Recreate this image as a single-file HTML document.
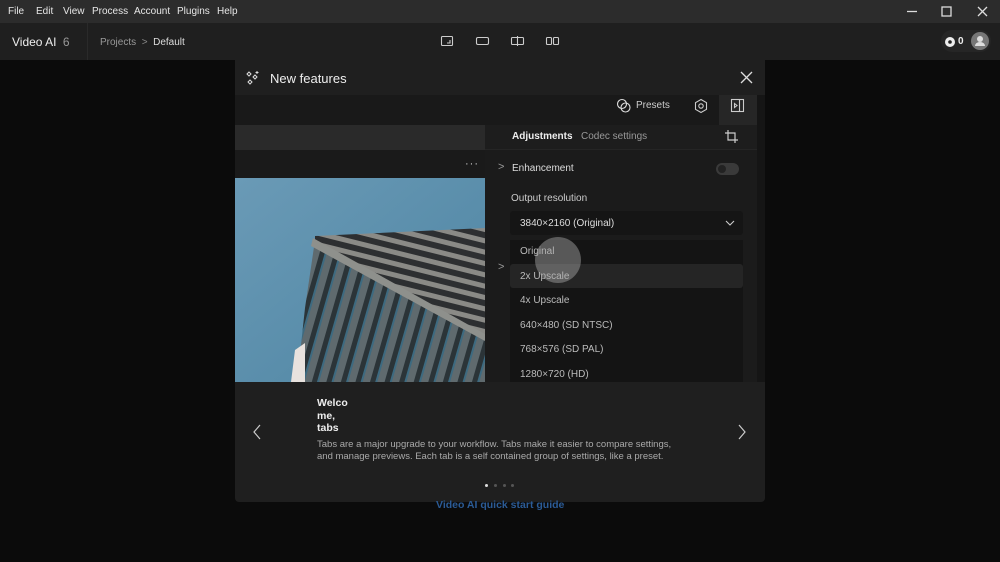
<!DOCTYPE html>
<html><head><meta charset="utf-8"><style>
*{margin:0;padding:0;box-sizing:border-box}
body{width:1000px;height:562px;background:#0b0b0b;font-family:"Liberation Sans",sans-serif;position:relative;overflow:hidden;color:#ddd}
.abs{position:absolute}
.menu{left:0;top:0;width:1000px;height:23px;background:#2c2c2c;font-size:10px;color:#e6e6e6}
.menu span{position:absolute;top:6px}
.tool{left:0;top:23px;width:1000px;height:37px;background:#1f1f1f}
.t{font-size:11px}
</style></head><body>
<div class="abs menu">
<span style="left:8px">File</span><span style="left:36px">Edit</span><span style="left:63px">View</span><span style="left:92px">Process</span><span style="left:134px">Account</span><span style="left:177px">Plugins</span><span style="left:217px">Help</span>
<svg class="abs" style="left:900px;top:0" width="100" height="23"><g stroke="#ddd" stroke-width="1.3" fill="none"><path d="M7 11.5h10"/><rect x="42" y="7" width="9" height="9"/><path d="M78 7l9 9M87 7l-9 9"/></g></svg>
</div>
<div class="abs tool">
<div class="abs" style="left:12px;top:12px;font-size:12px;color:#eee">Video AI <span style="color:#999;margin-left:3px">6</span></div>
<div class="abs" style="left:87px;top:0;width:1px;height:37px;background:#2a2a2a"></div>
<div class="abs" style="left:100px;top:14px;font-size:10px;color:#999">Projects &nbsp;<span style="color:#888">&gt;</span>&nbsp; <span style="color:#ddd">Default</span></div>
<svg class="abs" style="left:435px;top:8px" width="130" height="20"><g stroke="#ccc" stroke-width="1.1" fill="none"><rect x="6.5" y="5.5" width="11" height="9" rx="1"/><path d="M12 12h3v-3"/><rect x="41.5" y="6.5" width="12" height="7" rx="1.5"/><rect x="76.5" y="6.5" width="12" height="7" rx="1"/><path d="M82.5 5v10"/><rect x="111.5" y="6.5" width="5" height="7" rx="1"/><rect x="118.5" y="6.5" width="5" height="7" rx="1"/></g></svg>
<div class="abs" style="left:941px;top:7px;width:50px;height:22px;border-radius:11px;background:#262626"></div>
<svg class="abs" style="left:944px;top:13px" width="12" height="12"><circle cx="6" cy="6" r="5" fill="#eee"/><circle cx="6" cy="6" r="1.8" fill="#222"/></svg>
<div class="abs" style="left:958px;top:13px;font-size:10px;color:#eee;font-weight:bold">0</div>
<div class="abs" style="left:971px;top:9px;width:18px;height:18px;border-radius:50%;background:#777"><svg width="18" height="18"><circle cx="9" cy="7" r="3" fill="#ddd"/><path d="M4 14a5 4 0 0 1 10 0z" fill="#ddd"/></svg></div>
</div>

<!-- modal -->
<div class="abs" style="left:235px;top:60px;width:530px;height:442px;background:#1f1f1f;border-radius:0 0 4px 4px"></div>
<svg class="abs" style="left:244px;top:70px" width="18" height="18"><g fill="none" stroke="#ddd" stroke-width="1"><path d="M5 2l2 2-2 2-2-2z"/><path d="M11 5l2 2-2 2-2-2z"/><path d="M6 10l2 2-2 2-2-2z"/><path d="M13 1v3M11.5 2.5h3"/></g></svg>
<div class="abs" style="left:270px;top:71px;font-size:13px;color:#eee">New features</div>
<svg class="abs" style="left:739px;top:70px" width="16" height="16"><path d="M2 2l11 11M13 2l-11 11" stroke="#ddd" stroke-width="1.3"/></svg>

<!-- inner app -->
<div class="abs" style="left:235px;top:95px;width:530px;height:287px;background:#151515"></div>
<div class="abs" style="left:235px;top:95px;width:522px;height:30px;background:#191919"></div>
<div class="abs" style="left:719px;top:95px;width:38px;height:30px;background:#262626"></div>
<svg class="abs" style="left:616px;top:98px" width="16" height="16"><g fill="none" stroke="#ddd" stroke-width="1.1"><circle cx="6" cy="6" r="4.5"/><circle cx="9.5" cy="9.5" r="4.5"/></g></svg>
<div class="abs t" style="left:636px;top:100px;font-size:10px;color:#ccc">Presets</div>
<svg class="abs" style="left:693px;top:98px" width="16" height="16"><g fill="none" stroke="#ccc" stroke-width="1.1"><path d="M8 1.5l5.5 3.2v6.6L8 14.5 2.5 11.3V4.7z"/><circle cx="8" cy="8" r="2.2"/></g></svg>
<svg class="abs" style="left:730px;top:98px" width="16" height="16"><g fill="none" stroke="#ccc" stroke-width="1.1"><rect x="1.5" y="1.5" width="12" height="12"/><path d="M9.5 1.5v12M4.5 5.5l2.5 2-2.5 2z"/></g></svg>
<!-- left panel -->
<div class="abs" style="left:235px;top:125px;width:250px;height:25px;background:#2a2a2a"></div>
<div class="abs" style="left:235px;top:150px;width:250px;height:28px;background:#1a1a1a"></div>
<div class="abs" style="left:465px;top:158px;font-size:11px;color:#ccc;letter-spacing:1px">···</div>
<svg class="abs" style="left:235px;top:178px" width="250" height="204">
<defs><linearGradient id="sky" x1="0" y1="0" x2="1" y2="1"><stop offset="0" stop-color="#6a9ab6"/><stop offset="1" stop-color="#4d84a2"/></linearGradient>
<pattern id="win" width="14" height="300" patternUnits="userSpaceOnUse" patternTransform="rotate(16)"><rect width="14" height="300" fill="#5f6a6e"/><rect x="4" width="5" height="300" fill="#2b3438"/><rect x="9" width="2" height="300" fill="#3d6a80"/></pattern>
<pattern id="roof" width="300" height="11" patternUnits="userSpaceOnUse" patternTransform="rotate(14)"><rect width="300" height="11" fill="#8a8a86"/><rect y="3" width="300" height="6" fill="#2d2f31"/></pattern></defs>
<rect width="250" height="204" fill="url(#sky)"/>
<polygon points="80,58 250,50 250,160 80,64" fill="url(#roof)"/>
<polygon points="80,62 250,158 250,204 62,204 70,130" fill="url(#win)"/>
<polygon points="78,60 250,156 250,163 76,68" fill="#8e908c"/>
<polygon points="60,172 70,165 70,204 56,204" fill="#e8e2de"/>
</svg>
<!-- right panel -->
<div class="abs" style="left:485px;top:125px;width:272px;height:257px;background:#1b1b1b"></div>
<div class="abs" style="left:485px;top:125px;width:272px;height:25px;background:#1d1d1d;border-bottom:1px solid #252525"></div>
<div class="abs" style="left:512px;top:131px;font-size:10px;color:#eee;font-weight:bold">Adjustments</div>
<div class="abs" style="left:581px;top:131px;font-size:10px;color:#999">Codec settings</div>
<svg class="abs" style="left:724px;top:129px" width="16" height="16"><path d="M4 1v10h10M1 4h10v10" fill="none" stroke="#ccc" stroke-width="1.2"/></svg>
<div class="abs" style="left:498px;top:161px;font-size:11px;color:#999">&gt;</div>
<div class="abs" style="left:512px;top:163px;font-size:10px;color:#ddd">Enhancement</div>
<div class="abs" style="left:716px;top:163px;width:23px;height:12px;border-radius:6px;background:#3a3a3a"><div style="margin:2px;width:8px;height:8px;border-radius:50%;background:#222"></div></div>
<div class="abs" style="left:511px;top:193px;font-size:10px;color:#ccc">Output resolution</div>
<div class="abs" style="left:510px;top:211px;width:233px;height:24px;background:#151515;border-radius:3px"></div>
<div class="abs" style="left:520px;top:218px;font-size:10px;color:#ddd">3840×2160 (Original)</div>
<svg class="abs" style="left:725px;top:219px" width="10" height="8"><path d="M1 2l4 4 4-4" fill="none" stroke="#ccc" stroke-width="1.1"/></svg>
<div class="abs" style="left:510px;top:240px;width:233px;height:142px;background:#141414"></div>
<div class="abs" style="left:510px;top:264px;width:233px;height:24px;background:#252525;border-radius:3px"></div>
<div class="abs" style="left:498px;top:261px;font-size:11px;color:#999">&gt;</div>
<div class="abs" style="left:520px;top:240px;font-size:10px;color:#bbb;line-height:24.5px">Original<br>2x Upscale<br>4x Upscale<br>640×480 (SD NTSC)<br>768×576 (SD PAL)<br>1280×720 (HD)</div>
<div class="abs" style="left:535px;top:237px;width:46px;height:46px;border-radius:50%;background:rgba(170,170,170,0.45)"></div>

<!-- bottom -->
<svg class="abs" style="left:252px;top:424px" width="10" height="16"><path d="M8 1L2 8l6 7" fill="none" stroke="#ccc" stroke-width="1.2"/></svg>
<svg class="abs" style="left:737px;top:424px" width="10" height="16"><path d="M2 1l6 7-6 7" fill="none" stroke="#ccc" stroke-width="1.2"/></svg>
<div class="abs" style="left:317px;top:397px;font-size:10.5px;font-weight:bold;color:#eee;line-height:12.5px">Welco<br>me,<br>tabs</div>
<div class="abs" style="left:317px;top:439px;font-size:9.5px;color:#aaa;line-height:12px;white-space:nowrap">Tabs are a major upgrade to your workflow. Tabs make it easier to compare settings,<br>and manage previews. Each tab is a self contained group of settings, like a preset.</div>
<div class="abs" style="left:485px;top:484px;width:3px;height:3px;border-radius:50%;background:#ddd"></div>
<div class="abs" style="left:494px;top:484px;width:3px;height:3px;border-radius:50%;background:#555"></div>
<div class="abs" style="left:503px;top:484px;width:3px;height:3px;border-radius:50%;background:#555"></div>
<div class="abs" style="left:511px;top:484px;width:3px;height:3px;border-radius:50%;background:#555"></div>
<div class="abs" style="left:436px;top:499px;font-size:10.5px;color:#2b5b96;font-weight:bold">Video AI quick start guide</div>
</body></html>
